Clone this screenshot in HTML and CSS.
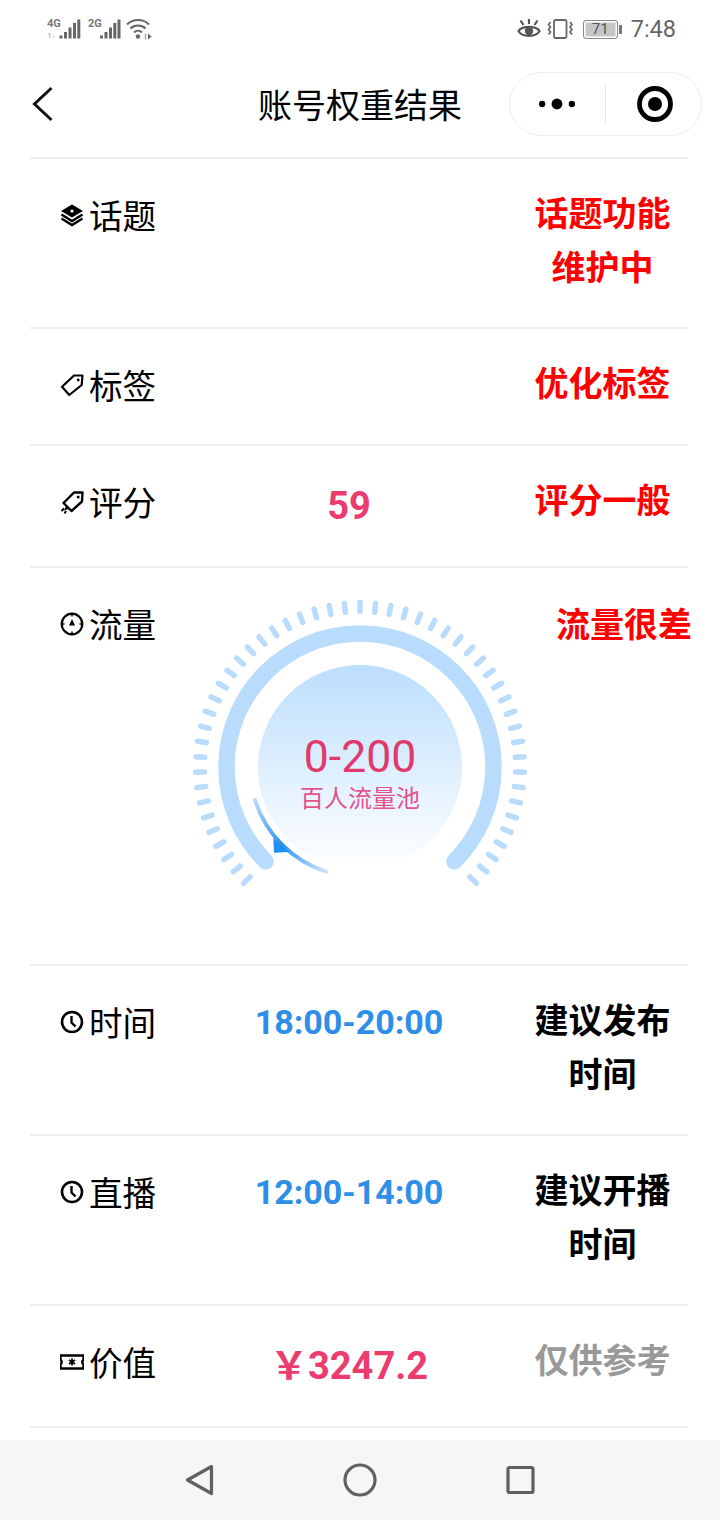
FILE: index.html
```html
<!DOCTYPE html>
<html lang="zh-CN">
<head>
<meta charset="utf-8">
<title>账号权重结果</title>
<link rel="stylesheet" href="styles.css">
</head>
<body>
<div class="page">
  <div class="status">
    <div class="status-left">
      <svg class="ic-sig1" width="34" height="22" viewBox="0 0 34 22">
        <text x="0" y="9" class="net">4G</text>
        <text x="0" y="20" class="net-sm">1↓</text>
        <g fill="#666"><rect x="12.500" y="17.500" width="3" height="3"/><rect x="17" y="14" width="3" height="6.500"/><rect x="21.500" y="9.500" width="3" height="11"/><rect x="26" y="5" width="3" height="15.500"/><rect x="30.300" y="1.500" width="3" height="19"/></g>
      </svg>
      <svg class="ic-sig2" width="33" height="22" viewBox="0 0 33 22">
        <text x="0" y="9" class="net">2G</text>
        <g fill="#666"><rect x="12" y="17.500" width="3" height="3"/><rect x="16.500" y="14" width="3" height="6.500"/><rect x="21" y="9.500" width="3" height="11"/><rect x="25.300" y="5" width="3" height="15.500"/><rect x="29.500" y="1.500" width="3" height="19"/></g>
      </svg>
      <svg class="ic-wifi" width="26" height="22" viewBox="0 0 26 22">
        <g fill="none" stroke="#666" stroke-width="2"><path d="M1 6.500C7 .5 17 .5 23 6.500"/><path d="M4.500 10.500C8.500 6.500 15.500 6.500 19.500 10.500"/><path d="M8 14.500C10.500 12 13.500 12 16 14.500"/></g>
        <circle cx="12" cy="18.500" r="2.200" fill="#666"/>
        <path d="M22 15.500l3.500 3-3.500 3z" fill="#666"/><path d="M19.500 15.500v6" stroke="#aaa" stroke-width="1.500"/>
      </svg>
    </div>
    <div class="status-right">
      <svg width="24" height="20" viewBox="0 0 24 20">
        <path d="M1.500 12C5 6.500 19 6.500 22.500 12C19 18.500 5 18.500 1.500 12Z" fill="none" stroke="#555" stroke-width="2.200"/>
        <circle cx="12" cy="12" r="4.200" fill="#555"/>
        <path d="M3.500 1.500l3 4.500M12 0v5M20.500 1.500l-3 4.500" stroke="#555" stroke-width="2.200"/>
      </svg>
      <svg class="ic-vib" width="27" height="20" viewBox="0 0 27 20">
        <rect x="7" y="1" width="12.500" height="18" rx="1.500" fill="none" stroke="#666" stroke-width="1.800"/>
        <path d="M3.500 3l-2 2.500 2 2.500-2 2.500 2 2.500-2 2.500M23 3l2 2.500-2 2.500 2 2.500-2 2.500 2 2.500" fill="none" stroke="#666" stroke-width="1.700"/>
      </svg>
      <div class="battery">
        <div class="battery-body">71</div>
        <div class="battery-nub"></div>
      </div>
      <span class="time">7:48</span>
    </div>
  </div>

  <div class="nav">
    <svg class="back" width="24" height="36" viewBox="0 0 24 36">
      <path d="M19.500 2L2.500 18L19.500 34" fill="none" stroke="#111" stroke-width="3"/>
    </svg>
    <div class="title">账号权重结果</div>
    <div class="capsule">
      <svg class="capsule-dots" width="95" height="64" viewBox="0 0 96 64"><circle cx="32.500" cy="32" r="3.200"/><circle cx="47.500" cy="32" r="5.500"/><circle cx="62.500" cy="32" r="3.200"/></svg>
      <div class="capsule-sep"></div>
      <svg class="capsule-ring" width="96" height="64" viewBox="0 0 96 64"><circle cx="49" cy="32" r="15.500" fill="none" stroke="#000" stroke-width="4.800"/><circle cx="49" cy="32" r="7"/></svg>
    </div>
  </div>

  <div class="list">
    <div class="row row-double">
      <div class="label"><svg class="icon" viewBox="0 0 24 24"><path d="M12 1.500L23 8L12 14.500L1 8Z" fill="#000"/><path d="M1.500 11.500L12 18L22.500 11.500M1.500 15.500L12 22L22.500 15.500" fill="none" stroke="#000" stroke-width="2.400"/><circle cx="12" cy="8" r="1.600" fill="#fff"/></svg>话题</div>
      <div class="value"></div>
      <div class="note note-red">话题功能维护中</div>
    </div>
    <div class="row row-tag">
      <div class="label"><svg class="icon" viewBox="0 0 24 24"><path d="M14 2.500H22.500L21.700 12L9.300 22L2 13.700Z" fill="none" stroke="#000" stroke-width="2.200" stroke-linejoin="round"/><circle cx="18.200" cy="7" r="1.400"/></svg>标签</div>
      <div class="value"></div>
      <div class="note note-red">优化标签</div>
    </div>
    <div class="row row-single">
      <div class="label"><svg class="icon" viewBox="0 0 24 24"><path d="M14 2.500H22.500L22 11.500L11.500 21L3.500 13Z" fill="none" stroke="#000" stroke-width="2.400" stroke-linejoin="round"/><circle cx="18.200" cy="7" r="1.500"/><path d="M4 18.500L1.500 21M6 21L4.500 23.500" stroke="#000" stroke-width="2"/><path d="M6.500 15L10 18.500L4 20.500Z"/></svg>评分</div>
      <div class="value value-pink">59</div>
      <div class="note note-red">评分一般</div>
    </div>
    <div class="row row-gauge">
      <div class="gauge">
        <svg width="340" height="300" viewBox="-170 -171 340 300">
          <defs>
            <linearGradient id="core" x1="0" y1="0" x2="0" y2="1">
              <stop offset="0" stop-color="#bcdefd"/>
              <stop offset="1" stop-color="#ffffff"/>
            </linearGradient>
            <linearGradient id="needle" gradientUnits="userSpaceOnUse" x1="-105" y1="33" x2="-33" y2="105">
              <stop offset="0" stop-color="#b8dafc"/>
              <stop offset="0.5" stop-color="#2c90f2"/>
              <stop offset="1" stop-color="#cfe6fb"/>
            </linearGradient>
            <line id="tick" x1="0" y1="-164.500" x2="0" y2="-155.500" stroke="#b9dcfd" stroke-width="5.500" stroke-linecap="round"/>
          </defs>
          <use href="#tick" transform="rotate(-135)"/><use href="#tick" transform="rotate(-129.6)"/><use href="#tick" transform="rotate(-124.2)"/><use href="#tick" transform="rotate(-118.8)"/><use href="#tick" transform="rotate(-113.4)"/><use href="#tick" transform="rotate(-108)"/><use href="#tick" transform="rotate(-102.6)"/><use href="#tick" transform="rotate(-97.2)"/><use href="#tick" transform="rotate(-91.8)"/><use href="#tick" transform="rotate(-86.4)"/><use href="#tick" transform="rotate(-81)"/><use href="#tick" transform="rotate(-75.6)"/><use href="#tick" transform="rotate(-70.2)"/><use href="#tick" transform="rotate(-64.8)"/><use href="#tick" transform="rotate(-59.4)"/><use href="#tick" transform="rotate(-54)"/><use href="#tick" transform="rotate(-48.6)"/><use href="#tick" transform="rotate(-43.2)"/><use href="#tick" transform="rotate(-37.8)"/><use href="#tick" transform="rotate(-32.4)"/><use href="#tick" transform="rotate(-27)"/><use href="#tick" transform="rotate(-21.6)"/><use href="#tick" transform="rotate(-16.2)"/><use href="#tick" transform="rotate(-10.8)"/><use href="#tick" transform="rotate(-5.4)"/><use href="#tick"/><use href="#tick" transform="rotate(5.4)"/><use href="#tick" transform="rotate(10.8)"/><use href="#tick" transform="rotate(16.2)"/><use href="#tick" transform="rotate(21.6)"/><use href="#tick" transform="rotate(27)"/><use href="#tick" transform="rotate(32.4)"/><use href="#tick" transform="rotate(37.8)"/><use href="#tick" transform="rotate(43.2)"/><use href="#tick" transform="rotate(48.6)"/><use href="#tick" transform="rotate(54)"/><use href="#tick" transform="rotate(59.4)"/><use href="#tick" transform="rotate(64.8)"/><use href="#tick" transform="rotate(70.2)"/><use href="#tick" transform="rotate(75.6)"/><use href="#tick" transform="rotate(81)"/><use href="#tick" transform="rotate(86.4)"/><use href="#tick" transform="rotate(91.8)"/><use href="#tick" transform="rotate(97.2)"/><use href="#tick" transform="rotate(102.6)"/><use href="#tick" transform="rotate(108)"/><use href="#tick" transform="rotate(113.4)"/><use href="#tick" transform="rotate(118.8)"/><use href="#tick" transform="rotate(124.2)"/><use href="#tick" transform="rotate(129.6)"/><use href="#tick" transform="rotate(135)"/>
          <path d="M-94.400 94.400A133.500 133.500 0 1 1 94.400 94.400" fill="none" stroke="#b9dcfd" stroke-width="16.500" stroke-linecap="round"/>
          <circle cx="0" cy="0" r="102" fill="url(#core)"/>
          <path d="M-105 33A110 110 0 0 0 -33.500 104.800" fill="none" stroke="url(#needle)" stroke-width="4" stroke-linecap="round"/>
          <path d="M-86.700 71.300L-86 85.700L-70.700 85Z" fill="#1e8ff5"/>
        </svg>
        <div class="gauge-text">
          <div class="gauge-num">0-200</div>
          <div class="gauge-sub">百人流量池</div>
        </div>
      </div>
      <div class="label"><svg class="icon" viewBox="0 0 24 24"><circle cx="12" cy="12" r="10.300" fill="none" stroke="#000" stroke-width="2.200"/><path d="M12 7L15 13.500H9Z"/><path d="M12 2v2.500M12 19.500V22M2 12h2.500M19.500 12H22" stroke="#000" stroke-width="1.500"/></svg>流量</div>
      <div class="note note-red note-wide">流量很差</div>
    </div>
    <div class="row row-double">
      <div class="label"><svg class="icon" viewBox="0 0 24 24"><circle cx="12" cy="12" r="10" fill="none" stroke="#000" stroke-width="2.600"/><path d="M11.500 6V12.500L15.500 16.500" fill="none" stroke="#000" stroke-width="2.400"/></svg>时间</div>
      <div class="value value-blue">18:00-20:00</div>
      <div class="note">建议发布时间</div>
    </div>
    <div class="row row-double">
      <div class="label"><svg class="icon" viewBox="0 0 24 24"><circle cx="12" cy="12" r="10" fill="none" stroke="#000" stroke-width="2.600"/><path d="M11.500 6V12.500L15.500 16.500" fill="none" stroke="#000" stroke-width="2.400"/></svg>直播</div>
      <div class="value value-blue">12:00-14:00</div>
      <div class="note">建议开播时间</div>
    </div>
    <div class="row row-single">
      <div class="label"><svg class="icon" viewBox="0 0 24 24"><path d="M0.500 5.500H23.500V9.500Q21 12 23.500 14.500V18.500H0.500V14.500Q3 12 0.500 9.500Z" fill="none" stroke="#000" stroke-width="2.400"/><path d="M12 8.500V15.500M9 10L15 14M15 10L9 14" stroke="#000" stroke-width="1.800"/></svg>价值</div>
      <div class="value value-pink">￥3247.2</div>
      <div class="note note-gray">仅供参考</div>
    </div>
    <div class="row-end"></div>
  </div>

  <div class="softkeys">
    <svg width="32" height="36" viewBox="0 0 32 36"><path d="M29.500 4.500L5.500 18L29.500 31.500Z" fill="none" stroke="#606060" stroke-width="3.200" stroke-linejoin="round"/></svg>
    <svg width="36" height="36" viewBox="0 0 36 36"><circle cx="18" cy="18" r="15" fill="none" stroke="#606060" stroke-width="3.200"/></svg>
    <svg width="32" height="36" viewBox="0 0 32 36"><rect x="2" y="5.500" width="25" height="25" rx="1.500" fill="none" stroke="#606060" stroke-width="3.200"/></svg>
  </div>
</div>
</body>
</html>
```

FILE: styles.css
```css
* { box-sizing: border-box; }
html, body { margin: 0; padding: 0; background: #fff; }
body { font-family: "Noto Sans CJK SC", "Noto Sans", sans-serif; color: #000; }
.page { width: 720px; height: 1520px; overflow: hidden; display: flex; flex-direction: column; }

.status { height: 58px; display: flex; justify-content: space-between; align-items: center; padding: 0 44px 0 47px; }
.status-left, .status-right { display: flex; align-items: center; }
.ic-sig1 { margin-right: 7px; }
.ic-sig2 { margin-right: 5px; }
.net { font: 700 11px "Roboto", sans-serif; fill: #777; }
.net-sm { font: 700 8px "Roboto", sans-serif; fill: #bbb; }
.ic-vib { margin: 0 9px 0 6px; }
.battery { display: flex; align-items: center; margin-right: 9px; }
.battery-body { width: 35px; height: 19px; border: 1.500px solid #888; border-radius: 3px; background: #c6c6c6; box-shadow: inset 0 0 0 1.500px #fff; font: 400 15px/16px "Roboto", sans-serif; color: #555; text-align: center; }
.battery-nub { width: 2.500px; height: 9px; margin-left: 1.500px; background: #777; }
.time { font: 400 23.500px/28px "Roboto", sans-serif; color: #666; }

.nav { height: 92px; display: grid; grid-template-columns: 1fr auto 1fr; align-items: center; }
.back { margin-left: 32px; }
.title { font-size: 34px; line-height: 46px; }
.capsule { justify-self: end; margin-right: 18px; width: 193px; height: 64px; border: 1px solid #eee; border-radius: 32px; display: flex; align-items: center; }
.capsule svg { flex: none; }
.capsule-sep { width: 1px; height: 38px; background: #e6e6e6; flex: none; }

.list { margin-top: 7px; }
.row { margin: 0 32px 0 30px; padding: 30px 18px 0 30px; border-top: 2px solid #eee; display: grid; grid-template-columns: 167px 244px 1fr; align-items: start; }
.row-double { height: 170px; }
.row-tag { height: 117px; }
.row-single { height: 122px; }
.row-gauge { height: 398px; }
.row-end { margin: 0 32px 0 30px; border-top: 2px solid #eee; }
.label { grid-row: 1; grid-column: 1; display: flex; align-items: center; gap: 6px; margin: -1px 0 0 0; font-size: 33.600px; line-height: 54px; }
.label svg { margin-right: -1px; }
.icon { width: 24px; height: 24px; flex: none; }
.value { grid-row: 1; grid-column: 2; font: 700 34px/54px "Roboto", "Noto Sans CJK SC", sans-serif; text-align: center; }
.value-pink { color: #ec3b6e; font-size: 38px; line-height: 58px; margin-top: 1px; }
.value-blue { color: #2d8fe8; margin-top: -1px; }
.note { grid-row: 1; grid-column: 3; justify-self: end; width: 137px; margin: -4px -1px 0 0; font-size: 34px; font-weight: 700; line-height: 54px; text-align: center; }
.note-red { color: #f00; }
.note-gray { color: #999; }
.row-gauge .note-wide { width: auto; white-space: nowrap; margin: -2px -22px 0 0; }

.gauge { grid-column: 1 / -1; grid-row: 1; justify-self: center; margin: -2px 10px 0 0; position: relative; width: 340px; height: 300px; }
.gauge svg { display: block; }
.gauge-text { position: absolute; left: 0; right: 0; top: 138px; display: flex; flex-direction: column; align-items: center; }
.gauge-num { font: 400 44.500px/46px "Roboto", sans-serif; color: #e03a6c; }
.gauge-sub { font-size: 24px; line-height: 30px; color: #e2528c; margin-top: 2px; }

.softkeys { margin-top: auto; height: 80px; background: #f6f6f6; display: flex; justify-content: center; align-items: center; gap: 128px; }
```
